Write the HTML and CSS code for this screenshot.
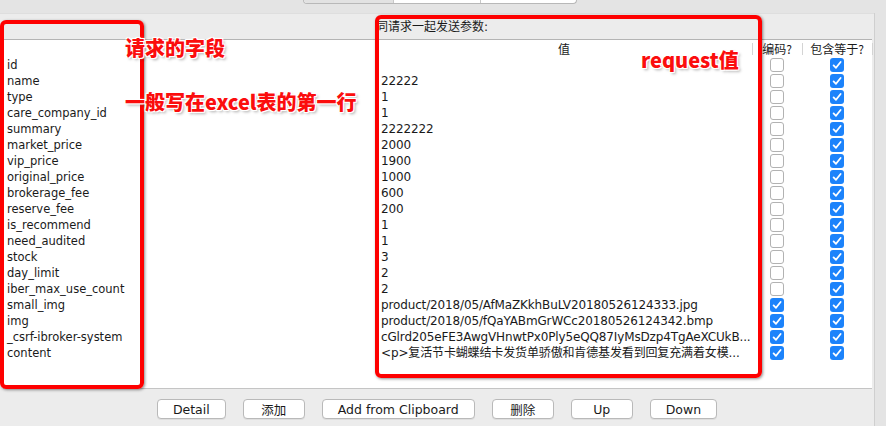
FILE: index.html
```html
<!DOCTYPE html>
<html lang="zh-CN">
<head>
    <meta charset="UTF-8">
    <title>HTTP请求 - 参数</title>
    <link rel="stylesheet" href="styles.css">
</head>
<body>
    <div class="page">
        <div class="tabs">
            <div class="seg-bar">
                <div class="seg seg-off"></div>
                <div class="seg"></div>
                <div class="seg seg-last"></div>
            </div>
        </div>

        <div class="panel">
            <div class="caption">同请求一起发送参数:</div>

            <div class="params">
                <div class="row head">
                    <div class="cell"></div>
                    <div class="cell center">值</div>
                    <div class="cell center sep">编码?</div>
                    <div class="cell center sep">包含等于?</div>
                    <div class="cell sep"></div>
                </div>
                <div id="paramRows"></div>
            </div>

            <div class="buttons">
                <button class="btn">Detail</button>
                <button class="btn">添加</button>
                <button class="btn">Add from Clipboard</button>
                <button class="btn">删除</button>
                <button class="btn">Up</button>
                <button class="btn">Down</button>
            </div>
        </div>

        <!-- annotations drawn on top of the screenshot -->
        <div class="mark mark-names"></div>
        <div class="mark mark-values"></div>
        <div class="note note-1">请求的字段</div>
        <div class="note note-2">一般写在excel表的第一行</div>
        <div class="note note-3">request值</div>
    </div>

    <script>
        const params = [
            ['id', '', false],
            ['name', '22222', false],
            ['type', '1', false],
            ['care_company_id', '1', false],
            ['summary', '2222222', false],
            ['market_price', '2000', false],
            ['vip_price', '1900', false],
            ['original_price', '1000', false],
            ['brokerage_fee', '600', false],
            ['reserve_fee', '200', false],
            ['is_recommend', '1', false],
            ['need_audited', '1', false],
            ['stock', '3', false],
            ['day_limit', '2', false],
            ['iber_max_use_count', '2', false],
            ['small_img', 'product/2018/05/AfMaZKkhBuLV20180526124333.jpg', true],
            ['img', 'product/2018/05/fQaYABmGrWCc20180526124342.bmp', true],
            ['_csrf-ibroker-system', 'cGlrd205eFE3AwgVHnwtPx0Ply5eQQ87IyMsDzp4TgAeXCUkB...', true],
            ['content', '<p>复活节卡蝴蝶结卡发货单骄傲和肯德基发看到回复充满着女模...', true],
        ];

        const tick = '<svg viewBox="0 0 14 14" width="14" height="14"><polyline points="3.6,7.4 6,9.8 10.6,4" fill="none" stroke="#fff" stroke-width="1.8" stroke-linecap="round" stroke-linejoin="round"/></svg>';

        function box(checked) {
            return `<span class="check${checked ? ' on' : ''}">${checked ? tick : ''}</span>`;
        }

        const rows = document.getElementById('paramRows');
        params.forEach(([name, value, encode]) => {
            const row = document.createElement('div');
            row.className = 'row';
            row.innerHTML = `
                <div class="cell name"></div>
                <div class="cell value"></div>
                <div class="cell center">${box(encode)}</div>
                <div class="cell center">${box(true)}</div>
                <div class="cell"></div>
            `;
            row.querySelector('.name').textContent = name;
            row.querySelector('.value').textContent = value;
            rows.appendChild(row);
        });
    </script>
</body>
</html>
```

FILE: styles.css
```css
body {
    margin: 0;
    background: #e4e4e4;
    font-family: 'DejaVu Sans', 'Noto Sans CJK SC', sans-serif;
    color: #1a1a1a;
}

.page {
    position: relative;
    width: 886px;
    height: 426px;
    overflow: hidden;
}

.tabs {
    height: 13px;
}

.seg-bar {
    display: flex;
    margin-left: 303px;
    width: 272px;
    height: 3px;
    border: 1px solid #b8b8b8;
    border-top: none;
    border-radius: 0 0 4px 4px;
    overflow: hidden;
    background: #ffffff;
}

.seg {
    width: 86px;
    border-left: 1px solid #c8c8c8;
}

.seg-off {
    width: 89px;
    border-left: none;
    background: #e2e2e2;
}

.seg-last {
    flex: 1;
}

.panel {
    width: 875px;
    height: 413px;
    background: #ececec;
    border-right: 1px solid #cfcfcf;
    box-sizing: border-box;
}

.caption {
    height: 26px;
    line-height: 26px;
    padding-left: 376px;
    font-size: 12px;
    border-top: 1px solid #dedede;
    box-sizing: border-box;
}

.params {
    margin: 0 2px 0 3px;
    height: 350px;
    background: #ffffff;
    border-top: 1px solid #b4b4b4;
    border-bottom: 1px solid #c4c4c4;
    box-sizing: border-box;
}

.row {
    display: grid;
    grid-template-columns: 373px 376px 50px 70px 1fr;
    height: 16px;
    font-size: 12px;
    line-height: 16px;
}

.row.head {
    height: 17px;
    line-height: 17px;
}

.cell {
    padding: 0 4px;
    white-space: nowrap;
    overflow: hidden;
}

.center {
    display: flex;
    justify-content: center;
    align-items: center;
    padding: 0;
}

.head .cell {
    font-family: 'Noto Sans CJK SC', sans-serif;
    font-size: 12px;
}

.head .sep {
    position: relative;
}

.head .sep::before {
    content: '';
    position: absolute;
    left: 0;
    top: 3px;
    height: 12px;
    border-left: 1px solid #d4d4d4;
}

.name {
    font-size: 11.5px;
}

.value {
    padding: 0 0 0 5px;
    letter-spacing: -0.14px;
}

.check {
    display: block;
    width: 12px;
    height: 12px;
    border: 1px solid #b2b2b2;
    border-radius: 3px;
    background: #ffffff;
}

.check.on {
    width: 14px;
    height: 14px;
    border: none;
    background: #1c83fb;
}

.check svg {
    display: block;
}

.buttons {
    display: flex;
    justify-content: center;
    gap: 17px;
    padding-top: 10px;
}

.btn {
    height: 20px;
    min-width: 62px;
    padding: 0 15px;
    background: #ffffff;
    border: 1px solid #b9b9b9;
    border-radius: 4px;
    box-shadow: 0 1px 0 rgba(0, 0, 0, 0.06);
    font-family: 'DejaVu Sans', 'Noto Sans CJK SC', sans-serif;
    font-size: 12.5px;
    color: #1a1a1a;
}

.mark {
    position: absolute;
    border: 4px solid #fe0000;
    border-radius: 6px;
    box-shadow: 1px 1px 3px rgba(0, 0, 0, 0.45);
    box-sizing: border-box;
}

.mark-names {
    left: 0;
    top: 20px;
    width: 144px;
    height: 369px;
}

.mark-values {
    left: 375px;
    top: 15px;
    width: 387px;
    height: 363px;
}

.note {
    position: absolute;
    font-family: 'Noto Sans CJK SC', sans-serif;
    font-weight: 900;
    font-size: 20px;
    line-height: 24px;
    color: #fb0d0d;
    white-space: nowrap;
    text-shadow: 1px 1px 0 #fff, -1px -1px 0 #fff, 1px -1px 0 #fff, -1px 1px 0 #fff,
        0 0 3px #fff, 2px 2px 3px rgba(0, 0, 0, 0.35);
}

.note-1 {
    left: 125px;
    top: 36px;
}

.note-2 {
    left: 125px;
    top: 90px;
}

.note-3 {
    left: 641px;
    top: 48px;
}
```
